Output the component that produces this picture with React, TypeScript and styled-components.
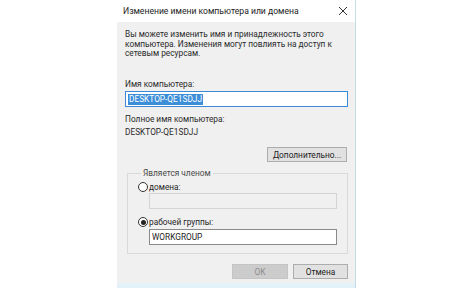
import React from 'react'
import styled, { createGlobalStyle } from 'styled-components'

const GlobalStyle = createGlobalStyle`
  html, body {
    margin: 0;
    padding: 0;
    background: #ffffff;
  }
  body {
    font-family: Roboto, 'Noto Sans', 'Liberation Sans', sans-serif;
    color: #1f1f1f;
  }
`

const Page = styled.div`
  display: flex;
  padding-left: 117px;
  height: 288px;
  overflow: hidden;
`

const Dialog = styled.div`
  width: 238px;
  height: 288px;
  border-right: 1px solid #c6dbe8;
  background: #f0f0f0;
  display: flex;
  flex-direction: column;
`

const TitleBar = styled.div`
  height: 22px;
  flex: none;
  background: #ffffff;
  display: flex;
  align-items: center;
  justify-content: space-between;
  padding: 0 7px 0 6px;
  font-size: 8.6px;
  color: #222;
`

const Body = styled.div`
  flex: 1;
  padding: 8px 7px 0 8px;
  display: flex;
  flex-direction: column;
  font-size: 8.3px;
`

const BottomEdge = styled.div`
  height: 5px;
  flex: none;
  background: #e2f2f8;
`

const Intro = styled.p`
  margin: 0;
  line-height: 9.7px;
  color: #2a2a2a;
  white-space: nowrap;
`

const Label = styled.div<{ $top?: number; $muted?: boolean }>`
  margin-top: ${({ $top }) => $top ?? 0}px;
  line-height: 10px;
  color: ${({ $muted }) => ($muted ? '#9a9a9a' : '#2a2a2a')};
  white-space: nowrap;
`

const TextField = styled.div<{ $focused?: boolean; $disabled?: boolean; $top?: number; $inset?: number }>`
  margin-top: ${({ $top }) => $top ?? 2}px;
  margin-left: ${({ $inset }) => $inset ?? 0}px;
  height: 16px;
  box-sizing: border-box;
  border: 1px solid ${({ $focused, $disabled }) => ($focused ? '#3c8ad6' : $disabled ? '#d4d4d4' : '#8a8a8a')};
  background: ${({ $disabled }) => ($disabled ? '#f0f0f0' : '#ffffff')};
  display: flex;
  align-items: center;
  padding-left: 2px;
  font-size: 8.3px;
  color: #222;
`

const Selected = styled.span`
  background: #3d8ed8;
  color: #ffffff;
  line-height: 11px;
  padding: 0 1px;
`

const Button = styled.div<{ $width: number; $disabled?: boolean }>`
  width: ${({ $width }) => $width}px;
  height: 15px;
  box-sizing: border-box;
  border: 1px solid ${({ $disabled }) => ($disabled ? '#c4c4c4' : '#adadad')};
  background: ${({ $disabled }) => ($disabled ? '#cccccc' : '#e1e1e1')};
  color: ${({ $disabled }) => ($disabled ? '#8c8c8c' : '#222')};
  display: flex;
  align-items: center;
  justify-content: center;
  font-size: 8.3px;
  white-space: nowrap;
`

const AdvancedRow = styled.div`
  margin-top: 10px;
  display: flex;
  justify-content: flex-end;
  padding-right: 1px;
`

const Group = styled.fieldset`
  margin: 6px 0 0 2px;
  padding: 0 10px 8px 10px;
  border: 1px solid #d9d9d9;
  min-width: 0;
`

const Legend = styled.legend`
  padding: 0 2px;
  margin-left: 3px;
  font-size: 8.3px;
  line-height: 10px;
  color: #4a4a4a;
`

const RadioRow = styled.div<{ $top?: number }>`
  margin-top: ${({ $top }) => $top ?? 0}px;
  display: flex;
  align-items: center;
  gap: 1px;
  height: 10px;
  white-space: nowrap;
`

const RadioCircle = styled.span<{ $checked?: boolean }>`
  width: 10px;
  height: 10px;
  box-sizing: border-box;
  border-radius: 50%;
  border: 1px solid #333;
  background: #fff;
  display: flex;
  align-items: center;
  justify-content: center;
  flex: none;

  &::after {
    content: '';
    width: 5px;
    height: 5px;
    border-radius: 50%;
    background: ${({ $checked }) => ($checked ? '#222' : 'transparent')};
  }
`

const Actions = styled.div`
  margin-top: 10px;
  display: flex;
  justify-content: flex-end;
  gap: 5px;
`

const CloseIcon = () => (
  <svg width="10" height="10" viewBox="0 0 10 10">
    <path d="M1 1L9 9M9 1L1 9" stroke="#333" strokeWidth="1" />
  </svg>
)

export default function App() {
  return (
    <>
      <GlobalStyle />
      <Page>
        <Dialog>
          <TitleBar>
            <span>Изменение имени компьютера или домена</span>
            <CloseIcon />
          </TitleBar>
          <Body>
            <Intro>
              Вы можете изменить имя и принадлежность этого
              <br />
              компьютера. Изменения могут повлиять на доступ к
              <br />
              сетевым ресурсам.
            </Intro>
            <Label $top={20}>Имя компьютера:</Label>
            <TextField $focused>
              <Selected>DESKTOP-QE1SDJJ</Selected>
            </TextField>
            <Label $top={7}>Полное имя компьютера:</Label>
            <Label $top={3}>DESKTOP-QE1SDJJ</Label>
            <AdvancedRow>
              <Button $width={80}>Дополнительно...</Button>
            </AdvancedRow>
            <Group>
              <Legend>Является членом</Legend>
              <RadioRow $top={4}>
                <RadioCircle />
                домена:
              </RadioRow>
              <TextField $disabled $inset={11} $top={1} />
              <RadioRow $top={8}>
                <RadioCircle $checked />
                рабочей группы:
              </RadioRow>
              <TextField $inset={11} $top={2}>
                WORKGROUP
              </TextField>
            </Group>
            <Actions>
              <Button $width={56} $disabled>
                OK
              </Button>
              <Button $width={55}>Отмена</Button>
            </Actions>
          </Body>
          <BottomEdge />
        </Dialog>
      </Page>
    </>
  )
}
